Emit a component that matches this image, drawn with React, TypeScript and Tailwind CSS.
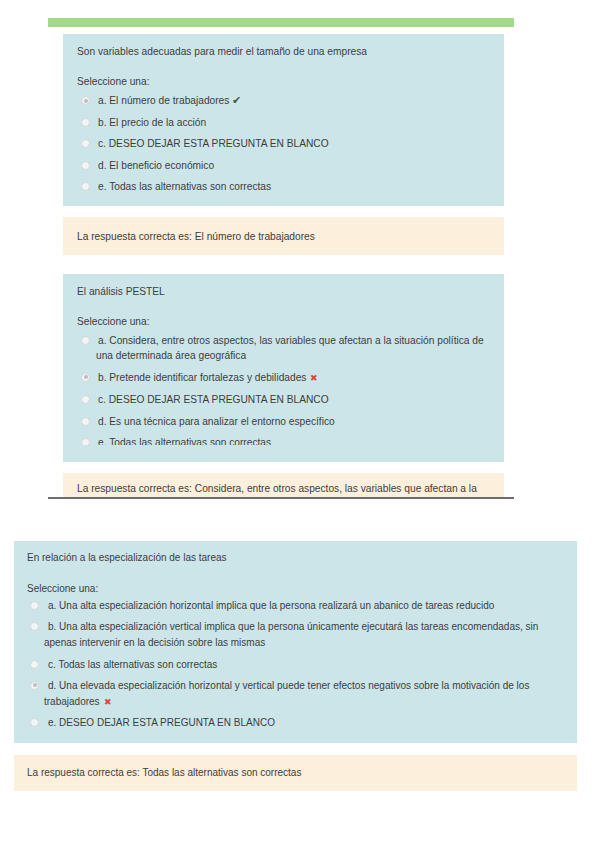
import type { ReactNode } from 'react'

type Option = { label: string; checked?: boolean; mark?: 'ok' | 'bad'; clip?: boolean }

function Radio({ checked }: { checked?: boolean }) {
  return (
    <span className="mt-[3px] flex h-[9px] w-[9px] shrink-0 items-center justify-center rounded-full border border-[#d2d6d8] bg-[#f3f5f5]">
      {checked && <span className="h-[4px] w-[4px] rounded-full bg-[#b9bdbf]" />}
    </span>
  )
}

function Mark({ kind }: { kind?: 'ok' | 'bad' }) {
  if (kind === 'ok') return <span className="ml-[3px] text-[11px] text-[#3f5e45]">✔</span>
  if (kind === 'bad') return <span className="ml-[4px] text-[9px] text-[#d8463c]">✖</span>
  return null
}

function OptionRow({ opt, big }: { opt: Option; big?: boolean }) {
  const row = (
    <div className={big ? 'flex gap-[6px] pl-[4px]' : 'flex gap-[5px] pl-[3px]'}>
      <Radio checked={opt.checked} />
      <div className={big ? 'indent-[2px]' : 'indent-[4px]'}>
        {opt.label}
        <Mark kind={opt.mark} />
      </div>
    </div>
  )
  if (opt.clip) return <div className="h-[10px] overflow-hidden">{row}</div>
  return row
}

function Formulation({ question, options, big, children }: { question: string; options: Option[]; big?: boolean; children?: ReactNode }) {
  return (
    <div
      className={
        big
          ? 'bg-[#cce5e9] pl-[14px] pr-[8px] pt-[10px] pb-[12px] text-[10.2px] leading-[15px]'
          : 'bg-[#cce5e9] pl-[13px] pr-[16px] pt-[9px] pb-[12px] text-[10px] leading-[16px]'
      }
    >
      <div>{question}</div>
      <div className="mt-[15px]">Seleccione una:</div>
      <div className={big ? 'mt-[4px] flex flex-col gap-[6.5px]' : 'mt-[1px] flex flex-col gap-[5.25px]'}>
        {options.map(o => (
          <OptionRow key={o.label} opt={o} big={big} />
        ))}
      </div>
      {children}
    </div>
  )
}

export default function App() {
  return (
    <div className="min-h-[848px] bg-white text-[#3d3d3d] [font-family:'Liberation_Sans',Arial,sans-serif]">
      {/* first page: two questions, cut at the bottom */}
      <div className="ml-[48px] flex h-[499px] w-[466px] flex-col pt-[18px]">
        <div className="h-[9px] shrink-0 bg-[#a3d98b]" />
        <div className="flex-1 overflow-hidden pl-[15px] pr-[10px] pt-[7px]">
          <Formulation
            big
            question="Son variables adecuadas para medir el tamaño de una empresa"
            options={[
              { label: 'a. El número de trabajadores', checked: true, mark: 'ok' },
              { label: 'b. El precio de la acción' },
              { label: 'c. DESEO DEJAR ESTA PREGUNTA EN BLANCO' },
              { label: 'd. El beneficio económico' },
              { label: 'e. Todas las alternativas son correctas' },
            ]}
          />
          <div className="mt-[11px] bg-[#fcefdc] pl-[14px] py-[11.5px] text-[10.2px] leading-[15px]">
            La respuesta correcta es: El número de trabajadores
          </div>
          <div className="mt-[19px]">
            <Formulation
              big
              question="El análisis PESTEL"
              options={[
                { label: 'a. Considera, entre otros aspectos, las variables que afectan a la situación política de una determinada área geográfica' },
                { label: 'b. Pretende identificar fortalezas y debilidades', checked: true, mark: 'bad' },
                { label: 'c. DESEO DEJAR ESTA PREGUNTA EN BLANCO' },
                { label: 'd. Es una técnica para analizar el entorno específico' },
                { label: 'e. Todas las alternativas son correctas', clip: true },
              ]}
            >
              <div className="h-[5px]" />
            </Formulation>
          </div>
          <div className="mt-[11px] bg-[#fcefdc] pl-[14px] pt-[8px] pb-[10px] text-[10.2px] leading-[15px]">
            La respuesta correcta es: Considera, entre otros aspectos, las variables que afectan a la situación política de una determinada área geográfica
          </div>
        </div>
        <div className="h-[2px] shrink-0 bg-[#6d6d6d]" />
      </div>

      {/* second page */}
      <div className="ml-[14px] mt-[42px] w-[563px]">
        <Formulation
          question="En relación a la especialización de las tareas"
          options={[
            { label: 'a. Una alta especialización horizontal implica que la persona realizará un abanico de tareas reducido' },
            { label: 'b. Una alta especialización vertical implica que la persona únicamente ejecutará las tareas encomendadas, sin apenas intervenir en la decisión sobre las mismas' },
            { label: 'c. Todas las alternativas son correctas' },
            { label: 'd. Una elevada especialización horizontal y vertical puede tener efectos negativos sobre la motivación de los trabajadores', checked: true, mark: 'bad' },
            { label: 'e. DESEO DEJAR ESTA PREGUNTA EN BLANCO' },
          ]}
        />
        <div className="mt-[12px] bg-[#fcefdc] pl-[13px] py-[10px] text-[10px] leading-[16px]">
          La respuesta correcta es: Todas las alternativas son correctas
        </div>
      </div>
    </div>
  )
}
